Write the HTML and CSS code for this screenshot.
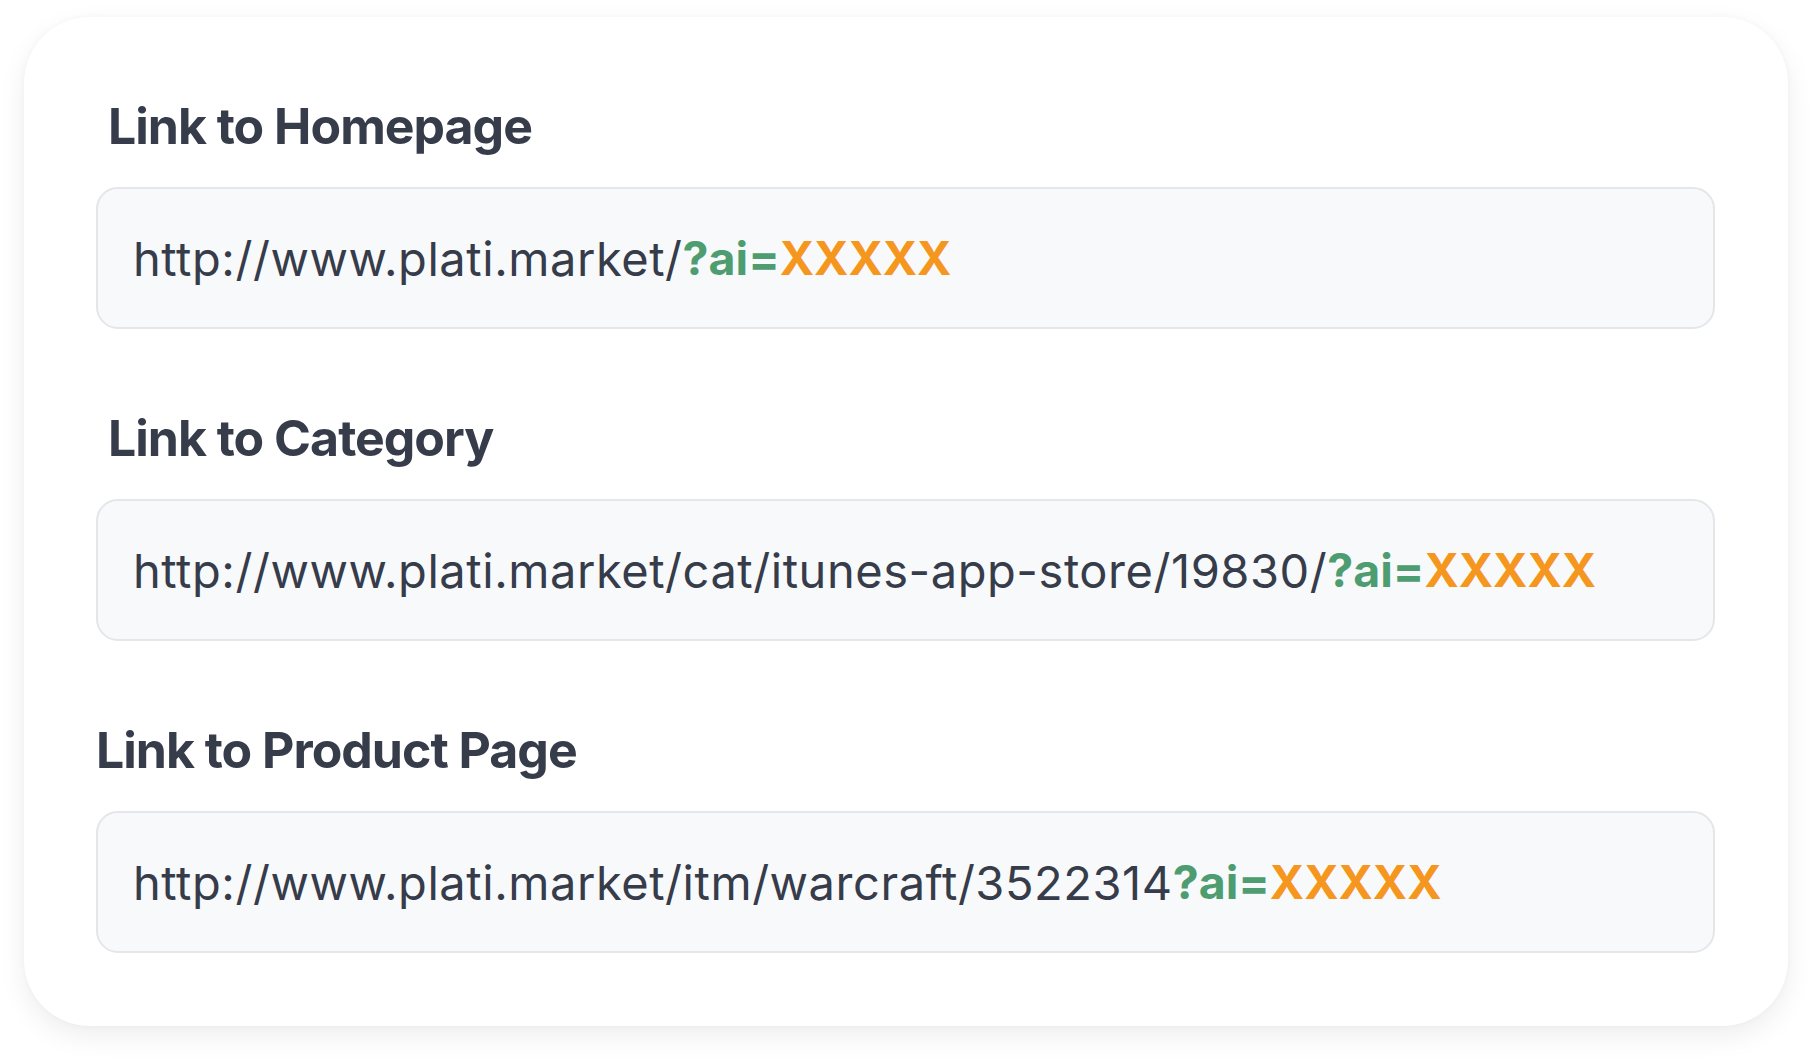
FILE: index.html
```html
<!DOCTYPE html>
<html lang="en">
<head>
<meta charset="utf-8">
<title>Affiliate links</title>
<link rel="stylesheet" href="styles.css">
</head>
<body>
  <main class="card">
    <section class="field">
      <h2 class="field-label field-label--inset">Link to Homepage</h2>
      <div class="url-box"><span class="url-base">http://www.plati.market/</span><span class="url-param">?ai=</span><span class="url-id">XXXXX</span></div>
    </section>
    <section class="field">
      <h2 class="field-label field-label--inset">Link to Category</h2>
      <div class="url-box"><span class="url-base">http://www.plati.market/cat/itunes-app-store/19830/</span><span class="url-param">?ai=</span><span class="url-id">XXXXX</span></div>
    </section>
    <section class="field">
      <h2 class="field-label">Link to Product Page</h2>
      <div class="url-box"><span class="url-base">http://www.plati.market/itm/warcraft/3522314</span><span class="url-param">?ai=</span><span class="url-id">XXXXX</span></div>
    </section>
  </main>
</body>
</html>
```

FILE: styles.css
```css
* { box-sizing: border-box; }

html, body {
  margin: 0;
  padding: 0;
  background: #ffffff;
}

body {
  padding: 17px 24px 36px 24px;
  font-family: Inter, "Noto Sans", "Liberation Sans", sans-serif;
  color: #363c4a;
}

.card {
  width: 1764px;
  height: 1009px;
  background: #ffffff;
  border-radius: 66px;
  box-shadow: 0 10px 28px rgba(0, 0, 0, 0.07), 0 0 6px rgba(0, 0, 0, 0.03);
  padding: 79px 73px 73px 72px;
  display: flex;
  flex-direction: column;
  gap: 79px;
}

.field {
  display: flex;
  flex-direction: column;
  gap: 31px;
}

.field-label {
  margin: 0;
  font-size: 50px;
  line-height: 60px;
  font-weight: 700;
  color: #363c4a;
  letter-spacing: -1px;
}

.field-label--inset {
  padding-left: 12px;
}

.url-box {
  height: 142px;
  border: 2px solid #e4e6ea;
  border-radius: 22px;
  background: #f8f9fb;
  padding: 0 35px;
  display: flex;
  align-items: center;
  font-size: 47px;
  font-weight: 400;
  white-space: nowrap;
}

.url-base {
  color: #363c4a;
  letter-spacing: 0.55px;
}

.url-param,
.url-id {
  font-size: 46.5px;
  font-weight: 700;
}

.url-param { color: #4e9d71; }

.url-id { color: #f5961f; }
```
